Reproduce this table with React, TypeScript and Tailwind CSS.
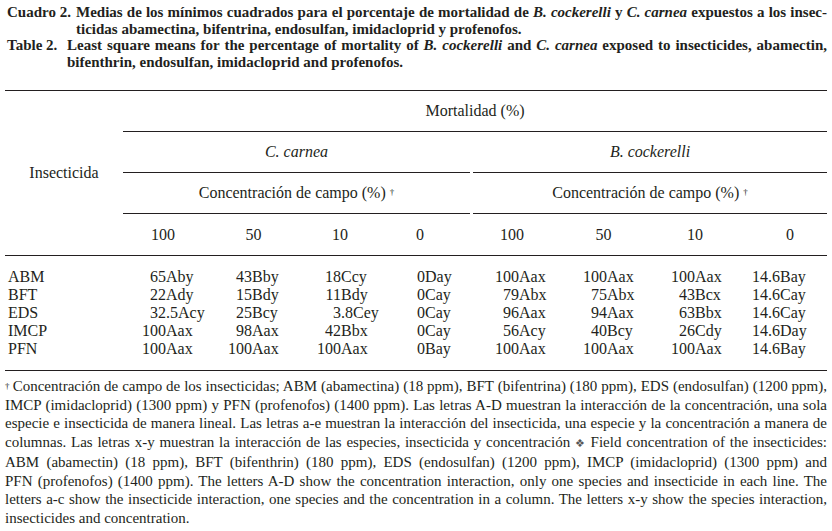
import React from 'react'

type Col = { w: string; head: string; num: string; int: string }

// column widths, header nudges and the box the integer part is right-aligned in
const cols: Col[] = [
  { w: 'w-[87px]', head: 'pr-[7px]', num: '100', int: 'w-[43px]' },
  { w: 'w-[87px]', head: '', num: '50', int: 'w-[42px]' },
  { w: 'w-[86px]', head: '', num: '10', int: 'w-[44px]' },
  { w: 'w-[87px]', head: 'pr-[13px]', num: '0', int: 'w-[42px]' },
  { w: 'w-[89px]', head: 'pr-[5px]', num: '100', int: 'w-[49px]' },
  { w: 'w-[89px]', head: '', num: '50', int: 'w-[48px]' },
  { w: 'w-[89px]', head: 'pl-[5px]', num: '10', int: 'w-[47px]' },
  { w: 'w-[89px]', head: 'pl-[17px]', num: '0', int: 'w-[31px]' },
]

const rows: [string, string[]][] = [
  ['ABM', ['65Aby', '43Bby', '18Ccy', '0Day', '100Aax', '100Aax', '100Aax', '14.6Bay']],
  ['BFT', ['22Ady', '15Bdy', '11Bdy', '0Cay', '79Abx', '75Abx', '43Bcx', '14.6Cay']],
  ['EDS', ['32.5Acy', '25Bcy', '3.8Cey', '0Cay', '96Aax', '94Aax', '63Bbx', '14.6Cay']],
  ['IMCP', ['100Aax', '98Aax', '42Bbx', '0Cay', '56Acy', '40Bcy', '26Cdy', '14.6Day']],
  ['PFN', ['100Aax', '100Aax', '100Aax', '0Bay', '100Aax', '100Aax', '100Aax', '14.6Bay']],
]

const notes = [
  'IMCP (imidacloprid) (1300 ppm) y PFN (profenofos) (1400 ppm). Las letras A-D muestran la interacción de la concentración, una sola',
  'especie e insecticida de manera lineal. Las letras a-e muestran la interacción del insecticida, una especie y la concentración a manera de',
]

const notesEn = [
  'ABM (abamectin) (18 ppm), BFT (bifenthrin) (180 ppm), EDS (endosulfan) (1200 ppm), IMCP (imidacloprid) (1300 ppm) and',
  'PFN (profenofos) (1400 ppm). The letters A-D show the concentration interaction, only one species and insecticide in each line. The',
  'letters a-c show the insecticide interaction, one species and the concentration in a column. The letters x-y show the species interaction,',
]

const Rule = () => <div className="h-px bg-[#231f20]" />

const Dagger = () => <sup className="text-[9px] ml-[4px] relative -top-[3px]">†</sup>

function Value({ v, box }: { v: string; box: string }) {
  const m = v.match(/^(\d+)(.*)$/)
  return (
    <div className="flex">
      <span className={`${box} text-right shrink-0`}>{m ? m[1] : v}</span>
      <span>{m ? m[2] : ''}</span>
    </div>
  )
}

export default function App() {
  const full = 'text-justify [text-align-last:justify]'
  return (
    <div className="w-[832px] h-[531px] bg-white px-[5px] text-[#231f20] font-['Liberation_Serif',serif] overflow-hidden">
      <div className="pt-[4px] text-[15px] leading-[16.5px] font-bold">
        <div className="flex">
          <span className="w-[71px] shrink-0 pl-[2px]">Cuadro 2.</span>
          <div className="flex-1">
            <div className={full}>
              Medias de los mínimos cuadrados para el porcentaje de mortalidad de <i>B. cockerelli</i> y <i>C. carnea</i> expuestos a los insec-
            </div>
            <div>ticidas abamectina, bifentrina, endosulfan, imidacloprid y profenofos.</div>
          </div>
        </div>
        <div className="flex">
          <span className="w-[62px] shrink-0 pl-[2px]">Table 2.</span>
          <div className="flex-1">
            <div className={full}>
              Least square means for the percentage of mortality of <i>B. cockerelli</i> and <i>C. carnea</i> exposed to insecticides, abamectin,
            </div>
            <div>bifenthrin, endosulfan, imidacloprid and profenofos.</div>
          </div>
        </div>
      </div>

      <div className="mt-[20px] text-[16px]">
        <Rule />
        <div className="flex">
          <div className="w-[118px] shrink-0 flex items-center justify-center">Insecticida</div>
          <div className="flex-1">
            <div className="h-[40px] flex items-center justify-center">Mortalidad (%)</div>
            <Rule />
            <div className="h-[40px] flex items-center italic">
              <div className="w-[347px] text-center">C. carnea</div>
              <div className="flex-1 text-center pl-[3px]">B. cockerelli</div>
            </div>
            <div className="flex gap-[3px]">
              <div className="w-[347px]"><Rule /></div>
              <div className="flex-1"><Rule /></div>
            </div>
            <div className="h-[40px] flex items-center">
              <div className="w-[347px] text-center">Concentración de campo (%)<Dagger /></div>
              <div className="flex-1 text-center pl-[3px]">Concentración de campo (%)<Dagger /></div>
            </div>
            <div className="flex gap-[3px]">
              <div className="w-[347px]"><Rule /></div>
              <div className="flex-1"><Rule /></div>
            </div>
            <div className="h-[41px] flex items-center">
              {cols.map((c, i) => (
                <div key={i} className={`${c.w} ${c.head} text-center`}>{c.num}</div>
              ))}
            </div>
          </div>
        </div>
        <Rule />
        <div className="pt-[12px] pb-[12px] leading-[18px]">
          {rows.map(([name, vals]) => (
            <div key={name} className="flex h-[18px]">
              <div className="w-[118px] shrink-0 pl-[3px]">{name}</div>
              {vals.map((v, i) => (
                <div key={i} className={cols[i].w}>
                  <Value v={v} box={cols[i].int} />
                </div>
              ))}
            </div>
          ))}
        </div>
        <Rule />
      </div>

      <div className="pt-[6px] text-[15px] leading-[18.5px]">
        <div className={full}>
          <sup className="text-[9px] mr-[3px] relative -top-[2px]">†</sup>Concentración de campo de los insecticidas; ABM (abamectina) (18 ppm), BFT (bifentrina) (180 ppm), EDS (endosulfan) (1200 ppm),
        </div>
        {notes.map((t) => (
          <div key={t} className={full}>{t}</div>
        ))}
        <div className={full}>
          columnas. Las letras x-y muestran la interacción de las especies, insecticida y concentración{' '}
          <span className="text-[11px] text-[#555] font-['DejaVu_Sans',sans-serif]">❖</span> Field concentration of the insecticides:
        </div>
        {notesEn.map((t) => (
          <div key={t} className={full}>{t}</div>
        ))}
        <div>insecticides and concentration.</div>
      </div>
    </div>
  )
}
